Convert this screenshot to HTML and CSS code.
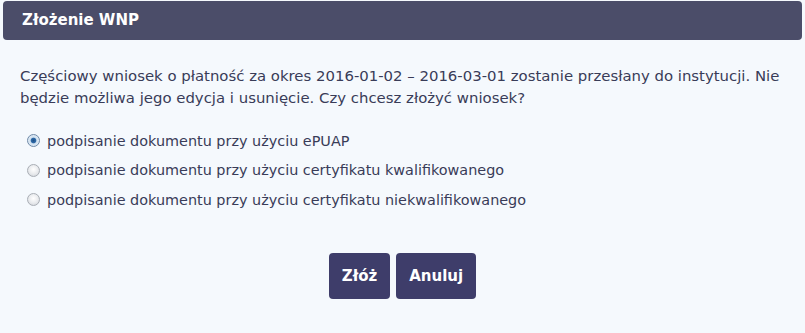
FILE: index.html
```html
<!DOCTYPE html>
<html lang="pl">
<head>
<meta charset="utf-8">
<link rel="stylesheet" href="styles.css">
</head>
<body>
<div class="dialog">
  <div class="header">Złożenie WNP</div>
  <div class="content">
    <p class="message">Częściowy wniosek o płatność za okres 2016-01-02 – 2016-03-01 zostanie przesłany do instytucji. Nie będzie możliwa jego edycja i usunięcie. Czy chcesz złożyć wniosek?</p>
    <div class="options">
      <label class="option"><span class="radio checked"></span>podpisanie dokumentu przy użyciu ePUAP</label>
      <label class="option"><span class="radio"></span>podpisanie dokumentu przy użyciu certyfikatu kwalifikowanego</label>
      <label class="option"><span class="radio"></span>podpisanie dokumentu przy użyciu certyfikatu niekwalifikowanego</label>
    </div>
    <div class="actions">
      <button class="btn">Złóż</button>
      <button class="btn">Anuluj</button>
    </div>
  </div>
</div>
</body>
</html>
```
FILE: styles.css
```css
html, body {
  margin: 0;
  padding: 0;
  background: #f5f9fd;
}
body {
  font-family: "DejaVu Sans", Verdana, sans-serif;
  color: #393c58;
  width: 805px;
  height: 333px;
  overflow: hidden;
}
.dialog {
  padding: 1px 3px 0 3px;
}
.header {
  height: 39px;
  box-sizing: border-box;
  background: #4b4d69;
  border-radius: 4px;
  color: #ffffff;
  font-weight: bold;
  font-size: 15px;
  line-height: 39px;
  padding-left: 19px;
}
.content {
  padding: 0 8px 0 17px;
}
.message {
  margin: 25px 0 0 0;
  font-size: 14.9px;
  line-height: 22px;
}
.options {
  margin-top: 17px;
  display: flex;
  flex-direction: column;
  padding-left: 7px;
}
.option {
  display: flex;
  align-items: center;
  height: 29.5px;
  font-size: 14.4px;
}
.radio {
  width: 11px;
  height: 11px;
  border-radius: 50%;
  border: 1px solid #a9aeb5;
  background: radial-gradient(circle at 50% 40%, #ffffff 0%, #e8eaed 55%, #c9cdd3 100%);
  margin-right: 7px;
  flex: none;
}
.radio.checked {
  border-color: #6f8aa8;
  background: radial-gradient(circle at 50% 50%, #1d4f86 0%, #2f6aa8 30%, #cfe0ef 42%, #eef4fa 100%);
}
.actions {
  display: flex;
  justify-content: center;
  gap: 6px;
  margin-top: 38px;
  padding-right: 9px;
}
.btn {
  font-family: "DejaVu Sans", Verdana, sans-serif;
  font-weight: bold;
  font-size: 15px;
  color: #ffffff;
  background: #3e3d6a;
  border: none;
  border-radius: 4px;
  height: 46px;
  padding: 0 13px;
}
```
